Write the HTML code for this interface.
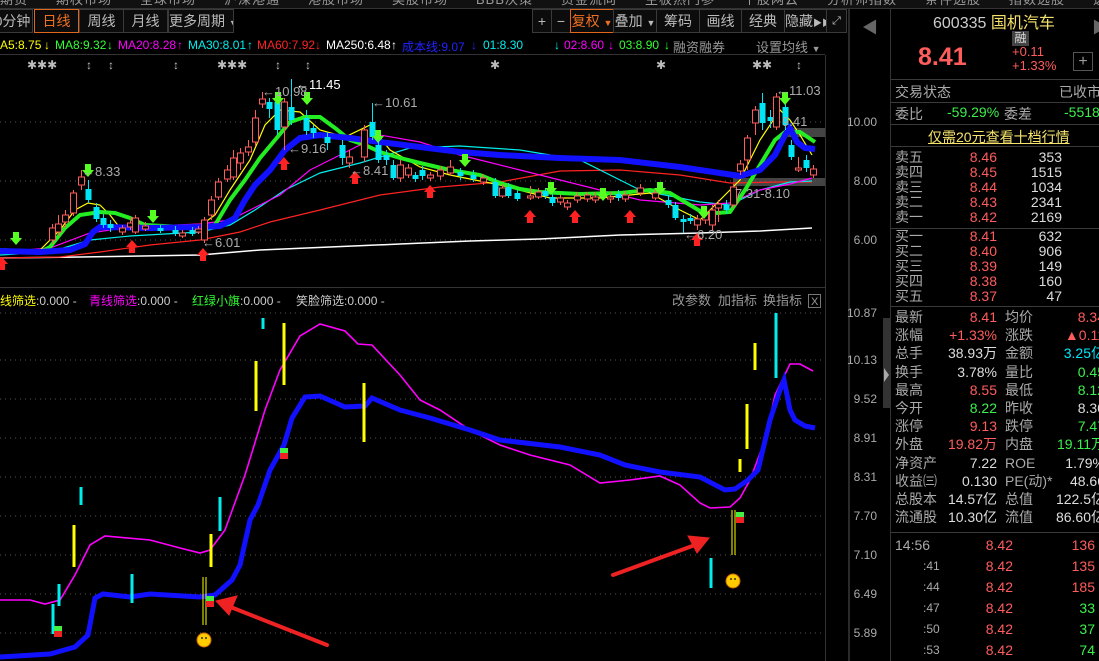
<!DOCTYPE html>
<html><head><meta charset="utf-8">
<style>
*{margin:0;padding:0;box-sizing:border-box}
body{width:1099px;height:661px;background:#000;overflow:hidden;position:relative;font-family:"Liberation Sans","Noto Sans CJK SC",sans-serif;font-size:13px;color:#ccc}
.a{position:absolute;white-space:nowrap}
.btn{position:absolute;top:9px;height:24px;border:1px solid #3a3a3a;color:#bbb;font-size:14px;line-height:22px;text-align:center;background:#0c0c0c;white-space:nowrap;overflow:hidden}
.or{border:1px solid #e0661a;color:#f07020}
.r{color:#ff5c5c}.g{color:#3cf04c}.w{color:#ddd}.gy{color:#aaa}.c{color:#00e8ff}
.row{position:absolute;left:895px;width:204px;height:15px;font-size:14px;line-height:15px}
.row span{position:absolute}
.s{position:absolute;left:895px;width:204px;height:18px;font-size:14px;line-height:18px}
.s span{position:absolute;white-space:nowrap}
.hl{position:absolute;left:891px;width:208px;height:1px;background:#3a3a3a}
.lg{position:absolute;top:38px;font-size:12px;white-space:nowrap}
</style></head><body>
<!-- top menu -->
<div class="a" style="left:0;top:0;width:1099px;height:8px;background:#111;overflow:hidden"><div class="a" style="left:0;top:-11px;font-size:13px;color:#999;letter-spacing:1px">期货　　期权市场　　全球市场　　沪深港通　　港股市场　　美股市场　　BBB决策　　资金流向　　主板热门参　　个股网云　　分析师指数　　条件选股　　指数选股　　选股器 ▾　　　　打开导航　　返回</div></div>
<div class="a" style="left:0;top:8px;width:1099px;height:1px;background:#333"></div>
<!-- toolbar -->
<div class="btn" style="left:-8px;width:41px">0分钟</div>
<div class="btn or" style="left:34px;width:45px">日线</div>
<div class="btn" style="left:79px;width:45px">周线</div>
<div class="btn" style="left:123px;width:45px">月线</div>
<div class="btn" style="left:168px;width:66px">更多周期 <span style="font-size:9px">▼</span></div>
<div class="btn" style="left:532px;width:20px">+</div>
<div class="btn" style="left:551px;width:20px">−</div>
<div class="btn or" style="left:570px;width:44px">复权 <span style="font-size:9px">▼</span></div>
<div class="btn" style="left:613px;width:44px">叠加 <span style="font-size:9px">▼</span></div>
<div class="btn" style="left:656px;width:44px">筹码</div>
<div class="btn" style="left:699px;width:43px">画线</div>
<div class="btn" style="left:741px;width:44px">经典</div>
<div class="btn" style="left:784px;width:43px">隐藏<span style="font-size:9px">▶▶</span></div>
<div class="btn" style="left:826px;width:21px;font-size:11px">⤢</div>
<div class="a" style="left:848px;top:9px;width:2px;height:652px;background:#2a2a2a"></div>
<!-- MA legend -->
<span class="lg" style="left:0;color:#ff0">A5:8.75</span><span class="lg" style="left:44px;color:#ff0">↓</span>
<span class="lg" style="left:55px;color:#3f3">MA8:9.32</span><span class="lg" style="left:107px;color:#3f3">↓</span>
<span class="lg" style="left:118px;color:#f0f">MA20:8.28</span><span class="lg" style="left:177px;color:#f0f">↑</span>
<span class="lg" style="left:188px;color:#0ee">MA30:8.01</span><span class="lg" style="left:247px;color:#0ee">↑</span>
<span class="lg" style="left:257px;color:#f22">MA60:7.92</span><span class="lg" style="left:315px;color:#f22">↓</span>
<span class="lg" style="left:326px;color:#fff">MA250:6.48</span><span class="lg" style="left:391px;color:#fff">↑</span>
<span class="lg" style="left:402px;color:#22f">成本线:9.07</span><span class="lg" style="left:471px;color:#22f">↓</span>
<span class="lg" style="left:483px;color:#0ee">01:8.30</span><span class="lg" style="left:554px;color:#0ee">↓</span>
<span class="lg" style="left:564px;color:#f0f">02:8.60</span><span class="lg" style="left:608px;color:#f0f">↓</span>
<span class="lg" style="left:619px;color:#3f3">03:8.90</span><span class="lg" style="left:664px;color:#3f3">↓</span>
<span class="lg" style="left:673px;color:#999;font-size:13px;top:37px">融资融券</span>
<div class="a" style="left:756px;top:37px;font-size:13px;color:#999">设置均线 <span style="font-size:9px">▼</span></div>
<div class="a" style="left:0;top:54px;width:825px;height:1px;background:#333"></div>

<svg class="a" style="left:0;top:0" width="890" height="661" xmlns="http://www.w3.org/2000/svg" font-family="Liberation Sans, sans-serif">
<g stroke="#555" stroke-dasharray="1,4" stroke-width="1">
<line x1="0" y1="122" x2="825" y2="122"/><line x1="0" y1="181" x2="825" y2="181"/><line x1="0" y1="240" x2="825" y2="240"/>
<line x1="0" y1="313" x2="825" y2="313"/><line x1="0" y1="360" x2="825" y2="360"/><line x1="0" y1="399" x2="825" y2="399"/><line x1="0" y1="438" x2="825" y2="438"/><line x1="0" y1="477" x2="825" y2="477"/><line x1="0" y1="516" x2="825" y2="516"/><line x1="0" y1="555" x2="825" y2="555"/><line x1="0" y1="594" x2="825" y2="594"/><line x1="0" y1="633" x2="825" y2="633"/>
</g>
<line x1="825.5" y1="55" x2="825.5" y2="661" stroke="#333"/>
<line x1="0" y1="287.5" x2="825" y2="287.5" stroke="#333"/>
<rect x="883" y="318" width="7" height="90" fill="#333"/>
<polygon points="884,368 889,375 884,382" fill="#aaa"/>
<g fill="#aaa" font-size="12" text-anchor="end">
<text x="877" y="126">10.00</text><text x="877" y="185">8.00</text><text x="877" y="244">6.00</text>
<text x="877" y="317">10.87</text><text x="877" y="364">10.13</text><text x="877" y="403">9.52</text><text x="877" y="442">8.91</text><text x="877" y="481">8.31</text><text x="877" y="520">7.70</text><text x="877" y="559">7.10</text><text x="877" y="598">6.49</text><text x="877" y="637">5.89</text>
</g>
<rect x="733" y="178" width="92" height="8" fill="#555" opacity=".8"/>
<rect x="785" y="128" width="40" height="9" fill="#555" opacity=".8"/>
<polyline fill="none" stroke="#fff" stroke-width="1.5" points="0,258 80,257 200,255 260,250 330,247 400,244 470,241 540,239 620,235 700,233 760,231 812,228"/>
<polyline fill="none" stroke="#f22" stroke-width="1.2" points="0,258 60,257 100,252 150,245 200,240 240,232 270,222 320,210 380,195 440,187 500,182 560,171 620,170 680,175 730,183 780,182 812,182"/>
<polyline fill="none" stroke="#0ee" stroke-width="1.2" points="0,255 50,252 90,240 130,236 200,232 230,225 255,210 285,190 320,173 360,163 410,148 460,146 520,150 580,160 640,190 700,202 730,205 760,190 790,182 812,181"/>
<polyline fill="none" stroke="#f0f" stroke-width="1.2" points="0,252 50,248 90,233 130,227 200,224 230,220 250,210 280,195 310,170 340,155 380,135 420,142 460,155 520,170 580,185 640,200 700,205 730,203 760,190 790,184 812,178"/>
<polyline fill="none" stroke="#ff0" stroke-width="1.2" points="0,250 40,250 60,230 75,210 88,203 100,205 110,215 120,228 150,225 200,226 215,215 230,190 250,160 265,125 280,110 300,112 320,130 345,137 370,125 390,150 420,167 450,175 500,185 550,198 600,198 650,193 680,210 700,220 720,200 740,180 760,140 780,110 790,120 800,135 812,155"/>
<polyline fill="none" stroke="#2e2" stroke-width="4" points="0,250 40,252 50,247 65,228 80,215 100,212 115,213 130,218 145,225 200,228 215,225 230,200 245,180 260,158 275,140 290,122 305,117 320,117 335,128 350,140 365,145 380,152 400,158 420,163 450,170 480,175 500,183 520,189 540,192 580,194 620,193 650,190 670,193 690,205 705,214 730,212 745,190 760,165 775,140 785,132 800,132 815,142"/>
<polyline fill="none" stroke="#11f" stroke-width="6" points="0,251 40,252 70,250 85,244 93,232 100,227 150,228 200,227 220,226 235,218 245,200 255,185 270,170 285,150 300,138 320,135 350,138 380,142 420,147 460,152 500,155 560,158 620,160 680,167 720,173 740,176 760,170 775,155 785,135 790,128 797,142 805,148 815,149"/>
<g id="cd"></g>
<g id="ar"></g>
<g fill="#aaa" font-size="13">
<text x="296" y="89" fill="#fff">←11.45</text><text x="262" y="96">←10.98</text><text x="372" y="107">←10.61</text>
<text x="288" y="153">←9.16</text><text x="350" y="175">←8.41</text><text x="82" y="176">←8.33</text>
<text x="202" y="247">←6.01</text><text x="684" y="239">←6.20</text><text x="735" y="198">7.31-8.10</text>
<text x="776" y="95">←11.03</text><text x="782" y="126">9.41</text>
</g>
<g fill="#bbb" font-size="12">
<text x="27" y="69">✱✱✱</text><text x="86" y="69">↕</text><text x="108" y="69">↕</text><text x="173" y="69">↕</text><text x="217" y="69">✱✱✱</text><text x="275" y="69">↕</text><text x="305" y="69">↕</text><text x="490" y="69">✱</text><text x="656" y="69">✱</text><text x="752" y="69">✱✱</text><text x="796" y="69">↕</text>
</g>
<g font-size="12">
<text x="0" y="305" fill="#ff0">线筛选<tspan fill="#ccc">:0.000 -</tspan></text>
<text x="89" y="305" fill="#f0f">青线筛选<tspan fill="#ccc">:0.000 -</tspan></text>
<text x="192" y="305" fill="#3f3">红绿小旗<tspan fill="#ccc">:0.000 -</tspan></text>
<text x="296" y="305" fill="#ccc">笑脸筛选:0.000 -</text>
</g>
<g fill="#999" font-size="13"><text x="672" y="305">改参数</text><text x="718" y="305">加指标</text><text x="763" y="305">换指标</text></g>
<rect x="808.5" y="294.5" width="12" height="13" fill="none" stroke="#777"/><text x="811" y="305" fill="#999" font-size="11">X</text>
<polyline fill="none" stroke="#f0f" stroke-width="1.6" points="0,600 30,600 45,604 60,600 75,575 90,545 105,536 150,540 180,548 200,553 210,550 225,530 245,475 265,410 280,370 300,336 320,324 345,331 358,344 372,345 400,375 420,400 440,410 470,430 500,445 530,455 570,465 600,483 630,480 660,476 680,485 700,503 710,508 730,507 740,498 750,480 765,440 775,395 790,364 800,364 813,371"/>
<polyline fill="none" stroke="#11f" stroke-width="5" points="0,657 50,654 75,647 88,635 95,598 103,594 130,597 150,594 200,597 215,595 232,580 240,565 250,520 258,505 270,470 284,445 292,418 305,397 320,396 345,407 365,406 372,398 400,410 430,418 470,430 500,440 560,447 600,455 625,465 660,472 700,477 725,490 735,489 748,480 758,470 770,420 780,390 784,380 790,410 795,420 805,426 815,428"/>
<g stroke-width="3">
<line x1="74" y1="525" x2="74" y2="567" stroke="#ff0"/><line x1="211" y1="534" x2="211" y2="567" stroke="#ff0"/><line x1="256" y1="361" x2="256" y2="411" stroke="#ff0"/><line x1="284" y1="323" x2="284" y2="385" stroke="#ff0"/><line x1="364" y1="383" x2="364" y2="442" stroke="#ff0"/><line x1="747" y1="404" x2="747" y2="449" stroke="#ff0"/><line x1="740" y1="459" x2="740" y2="472" stroke="#ff0"/><line x1="755" y1="343" x2="755" y2="370" stroke="#ff0"/>
<line x1="263" y1="318" x2="263" y2="329" stroke="#0ee"/><line x1="81" y1="487" x2="81" y2="505" stroke="#0ee"/><line x1="59" y1="584" x2="59" y2="606" stroke="#0ee"/><line x1="53" y1="604" x2="53" y2="634" stroke="#0ee"/><line x1="132" y1="574" x2="132" y2="603" stroke="#0ee"/><line x1="220" y1="497" x2="220" y2="531" stroke="#0ee"/><line x1="711" y1="558" x2="711" y2="588" stroke="#0ee"/><line x1="776" y1="313" x2="776" y2="378" stroke="#0ee"/>
</g>
<line x1="203" y1="577" x2="203" y2="625" stroke="#ff0"/><line x1="206" y1="577" x2="206" y2="625" stroke="#ff0"/>
<line x1="732" y1="510" x2="732" y2="555" stroke="#ff0"/><line x1="735" y1="510" x2="735" y2="555" stroke="#ff0"/>
<g><rect x="54" y="626" width="8" height="5" fill="#4e4"/><rect x="54" y="631" width="8" height="6" fill="#e22"/>
<rect x="206" y="596" width="8" height="5" fill="#4e4"/><rect x="206" y="601" width="8" height="6" fill="#e22"/>
<rect x="280" y="448" width="8" height="5" fill="#4e4"/><rect x="280" y="453" width="8" height="6" fill="#e22"/>
<rect x="736" y="512" width="8" height="5" fill="#4e4"/><rect x="736" y="517" width="8" height="6" fill="#e22"/></g>
<g fill="#fc0" stroke="#c60"><circle cx="204" cy="640" r="7"/><circle cx="733" cy="581" r="7"/></g>
<g fill="#333"><circle cx="202" cy="638" r="1"/><circle cx="206" cy="638" r="1"/><circle cx="731" cy="579" r="1"/><circle cx="735" cy="579" r="1"/></g>
<g stroke="#e22" stroke-width="4" stroke-linecap="round" fill="#e22">
<line x1="327" y1="645" x2="228" y2="606"/><polygon points="216,601 237,596 229,615" stroke-width="1"/>
<line x1="613" y1="575" x2="695" y2="545"/><polygon points="709,538 688,536 697,553" stroke-width="1"/>
</g>
</svg>

<div class="a" style="left:890px;top:9px;width:1px;height:652px;background:#333"></div>
<div class="a" style="left:862px;top:14px;color:#666;font-size:16px">◀</div>
<div class="a" style="left:1092px;top:14px;color:#666;font-size:16px">▶</div>
<div class="a" style="left:933px;top:9px;font-size:16px"><span style="color:#ccc">600335</span> <span style="color:#f5e36c">国机汽车</span></div>
<div class="a" style="left:1012px;top:31px;width:17px;height:15px;background:#444;color:#ddd;font-size:12px;line-height:15px;text-align:center">融</div>
<div class="a r" style="left:918px;top:43px;font-size:25px;font-weight:bold">8.41</div>
<div class="a r" style="left:1012px;top:45px;font-size:13px;line-height:14px">+0.11<br>+1.33%</div>
<div class="a" style="left:1073px;top:52px;width:20px;height:19px;border:1px solid #555;color:#999;text-align:center;line-height:17px;font-size:16px">+</div>
<div class="hl" style="top:79px"></div>
<div class="a gy" style="left:895px;top:82px;font-size:14px">交易状态</div><div class="a gy" style="left:1059px;top:82px;font-size:14px">已收市</div>
<div class="hl" style="top:102px"></div>
<div class="a gy" style="left:895px;top:104px;font-size:14px">委比</div><div class="a g" style="left:947px;top:104px;font-size:14px">-59.29%</div>
<div class="a gy" style="left:1004px;top:104px;font-size:14px">委差</div><div class="a g" style="left:1064px;top:104px;font-size:14px">-5518</div>
<div class="hl" style="top:124px"></div>
<div class="a" style="left:928px;top:127px;font-size:14px;color:#f5e36c;text-decoration:underline">仅需20元查看十档行情</div>
<div class="hl" style="top:146px"></div>
<div id="ob"></div>
<div class="hl" style="top:228px"></div>
<div class="hl" style="top:306px"></div>
<div id="st"></div>
<div class="hl" style="top:532px"></div>
<div id="tk"></div>
<script>
var ob=[["卖五","8.46","353"],["卖四","8.45","1515"],["卖三","8.44","1034"],["卖二","8.43","2341"],["卖一","8.42","2169"]],ob2=[["买一","8.41","632"],["买二","8.40","906"],["买三","8.39","149"],["买四","8.38","160"],["买五","8.37","47"]];
var h="";
ob.forEach(function(r,i){h+='<div class="row" style="top:'+(150+i*15)+'px"><span class="gy" style="left:0">'+r[0]+'</span><span class="r" style="right:102px">'+r[1]+'</span><span class="w" style="right:37px">'+r[2]+'</span></div>'});
ob2.forEach(function(r,i){h+='<div class="row" style="top:'+(229+i*15)+'px"><span class="gy" style="left:0">'+r[0]+'</span><span class="r" style="right:102px">'+r[1]+'</span><span class="w" style="right:37px">'+r[2]+'</span></div>'});
document.getElementById("ob").innerHTML=h;
var st=[["最新","8.41","r","均价","8.34","r"],["涨幅","+1.33%","r","涨跌","▲0.11","r"],["总手","38.93万","w","金额","3.25亿","c"],["换手","3.78%","w","量比","0.45","g"],["最高","8.55","r","最低","8.12","g"],["今开","8.22","g","昨收","8.30","w"],["涨停","9.13","r","跌停","7.47","g"],["外盘","19.82万","r","内盘","19.11万","g"],["净资产","7.22","w","ROE","1.79%","w"],["收益㈢","0.130","w","PE(动)*","48.66","w"],["总股本","14.57亿","w","总值","122.5亿","w"],["流通股","10.30亿","w","流值","86.60亿","w"]];
h="";st.forEach(function(r,i){h+='<div class="s" style="top:'+(308+i*18.2)+'px"><span class="gy" style="left:0">'+r[0]+'</span><span class="'+r[2]+'" style="right:102px">'+r[1]+'</span><span class="gy" style="left:110px">'+r[3]+'</span><span class="'+r[5]+'" style="right:-6px">'+r[4]+'</span></div>'});
document.getElementById("st").innerHTML=h;
var tk=[["14:56","136","r"],[":41","135","r"],[":44","185","r"],[":47","33","g"],[":50","37","g"],[":53","74","g"]];
h="";tk.forEach(function(r,i){h+='<div class="s" style="top:'+(536+i*21)+'px"><span class="gy" style="left:'+(i?28:0)+'px;'+(i?'font-size:12px':'')+'">'+r[0]+'</span><span class="r" style="right:86px">8.42</span><span class="'+r[2]+'" style="right:4px">'+r[1]+'</span></div>'});
document.getElementById("tk").innerHTML=h;
var C=[[52,228,240,224,244,'r'],[58,224,232,215,236,'r'],[65,215,222,210,228,'r'],[73,193,213,190,216,'r'],[81,177,185,170,190,'r'],[88,189,200,180,203,'c'],[96,207,219,203,222,'c'],[103,218,225,214,228,'c'],[110,224,228,220,232,'c'],[122,228,232,225,235,'r'],[130,223,227,217,230,'r'],[135,218,232,215,234,'r'],[145,226,229,222,231,'r'],[160,228,231,225,233,'c'],[175,230,234,226,236,'c'],[182,233,236,230,238,'r'],[192,230,234,227,236,'c'],[198,229,232,226,234,'r'],[204,220,240,217,243,'r'],
[211,200,215,196,220,'r'],[218,182,197,178,200,'r'],[227,170,179,165,182,'r'],[233,158,177,150,180,'r'],[240,153,163,148,170,'r'],[248,147,152,140,156,'r'],[255,118,142,110,146,'r'],[262,99,104,92,108,'r'],[269,102,109,98,118,'c'],[277,102,130,100,135,'c'],[284,102,127,98,150,'r'],[291,107,120,79,125,'c'],[306,118,131,110,135,'c'],[313,128,133,125,138,'c'],[327,137,143,132,150,'c'],[342,145,158,140,165,'c'],[349,157,163,150,168,'r'],[364,130,157,125,162,'r'],[372,122,137,103,140,'c'],[378,145,160,140,163,'c'],[386,155,160,150,165,'c'],[393,165,178,160,180,'c'],[400,165,178,160,182,'r'],[408,168,175,164,178,'r'],[415,175,179,172,182,'c'],[422,170,176,166,180,'c'],[430,175,178,172,181,'r'],[440,170,176,166,180,'r'],[450,167,173,160,176,'r'],[460,172,176,168,180,'c'],
[473,175,179,170,182,'c'],[483,178,182,174,185,'r'],[495,182,196,178,198,'c'],[502,188,196,184,198,'r'],[508,187,196,183,198,'c'],[517,193,199,190,201,'c'],[530,196,198,186,200,'r'],[538,192,197,188,199,'r'],[545,191,196,188,199,'c'],[552,197,203,194,206,'c'],[560,198,202,195,205,'r'],[567,203,207,200,210,'r'],[577,196,200,192,203,'r'],[587,195,199,192,202,'r'],[595,197,200,192,203,'r'],[610,197,199,192,203,'r'],[618,194,198,190,201,'c'],[625,195,199,191,202,'r'],[640,188,193,184,196,'r'],[655,193,198,190,200,'r'],[668,200,205,196,208,'c'],[675,205,218,202,220,'c'],[683,219,222,215,233,'c'],[690,218,221,214,224,'c'],[697,219,225,215,230,'r'],[705,212,220,208,224,'r'],[712,210,225,205,230,'r'],[718,204,208,200,222,'r'],[726,205,210,200,214,'c'],[733,187,205,184,208,'r'],[740,164,171,160,175,'r'],[747,138,160,135,170,'r'],[755,110,123,106,135,'r'],[762,103,123,93,130,'c'],[770,117,121,110,128,'c'],[776,97,127,93,130,'r'],[785,107,125,100,130,'c'],[791,145,157,140,160,'c'],[798,168,170,157,172,'r'],[806,160,168,155,172,'c'],[813,169,175,165,178,'r']];
var s="";C.forEach(function(k){var col=k[5]=='r'?'#ff5c5c':'#00e5f5';s+='<line x1="'+(k[0]+.5)+'" y1="'+k[3]+'" x2="'+(k[0]+.5)+'" y2="'+k[4]+'" stroke="'+col+'"/>';if(k[5]=='r')s+='<rect x="'+(k[0]-2.5)+'" y="'+k[1]+'" width="6" height="'+Math.max(1,k[2]-k[1])+'" fill="#000" stroke="'+col+'"/>';else s+='<rect x="'+(k[0]-2.5)+'" y="'+k[1]+'" width="6" height="'+Math.max(1,k[2]-k[1])+'" fill="'+col+'"/>'});
document.getElementById("cd").innerHTML=s;
var G=[[16,240],[88,172],[153,218],[278,100],[307,100],[378,138],[465,162],[551,190],[603,196],[660,190],[704,214],[785,100]],R=[[2,262],[132,245],[203,253],[284,162],[355,176],[430,190],[530,215],[575,215],[630,215],[697,238]];
s="";G.forEach(function(p){var x=p[0],y=p[1];s+='<polygon points="'+(x-3)+','+(y-8)+' '+(x+3)+','+(y-8)+' '+(x+3)+','+(y-2)+' '+(x+6)+','+(y-2)+' '+x+','+(y+5)+' '+(x-6)+','+(y-2)+' '+(x-3)+','+(y-2)+'" fill="#5f2"/>'});
R.forEach(function(p){var x=p[0],y=p[1];s+='<polygon points="'+(x-3)+','+(y+8)+' '+(x+3)+','+(y+8)+' '+(x+3)+','+(y+2)+' '+(x+6)+','+(y+2)+' '+x+','+(y-5)+' '+(x-6)+','+(y+2)+' '+(x-3)+','+(y+2)+'" fill="#f22"/>'});
document.getElementById("ar").innerHTML=s;
</script>
</body></html>
